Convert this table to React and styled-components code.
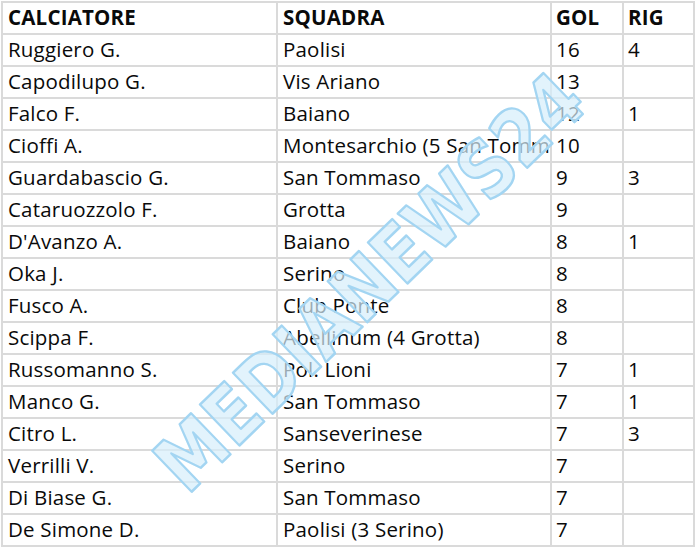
import React from 'react';
import styled, { createGlobalStyle } from 'styled-components';

const GlobalStyle = createGlobalStyle`
  html, body {
    margin: 0;
    padding: 0;
    background: #fff;
  }
  body {
    font-family: "Open Sans", Lato, sans-serif;
    color: #000;
  }
`;

const Page = styled.div`
  position: relative;
  width: 696px;
  height: 547px;
  overflow: hidden;
  padding: 1px 0 0 1px;
  box-sizing: border-box;
`;

const Table = styled.table`
  border-collapse: collapse;
  table-layout: fixed;
  width: 692px;
`;

const Cell = styled.td`
  border: 2px solid #dadada;
  height: 32px;
  padding: 0 0 3px ${(p) => (p.$narrow ? 4 : 5)}px;
  box-sizing: border-box;
  vertical-align: bottom;
  font-size: 20.5px;
  line-height: 25px;
  letter-spacing: 0.2px;
  font-weight: ${(p) => (p.$head ? 700 : 500)};
  color: #0a0a0a;
  white-space: nowrap;
  overflow: hidden;
`;

const Watermark = styled.svg`
  position: absolute;
  left: 0;
  top: 0;
  pointer-events: none;
`;

const rows = [
  ['Ruggiero G.', 'Paolisi', '16', '4'],
  ['Capodilupo G.', 'Vis Ariano', '13', ''],
  ['Falco F.', 'Baiano', '12', '1'],
  ['Cioffi A.', 'Montesarchio (5 San Tommaso)', '10', ''],
  ['Guardabascio G.', 'San Tommaso', '9', '3'],
  ['Cataruozzolo F.', 'Grotta', '9', ''],
  ["D'Avanzo A.", 'Baiano', '8', '1'],
  ['Oka J.', 'Serino', '8', ''],
  ['Fusco A.', 'Club Ponte', '8', ''],
  ['Scippa F.', 'Abellinum (4 Grotta)', '8', ''],
  ['Russomanno S.', 'Pol. Lioni', '7', '1'],
  ['Manco G.', 'San Tommaso', '7', '1'],
  ['Citro L.', 'Sanseverinese', '7', '3'],
  ['Verrilli V.', 'Serino', '7', ''],
  ['Di Biase G.', 'San Tommaso', '7', ''],
  ['De Simone D.', 'Paolisi (3 Serino)', '7', ''],
];

const widths = [275, 274, 72, 71];

export default function App() {
  return (
    <Page>
      <GlobalStyle />
      <Table>
        <colgroup>
          {widths.map((w, i) => (
            <col key={i} style={{ width: w }} />
          ))}
        </colgroup>
        <thead>
          <tr>
            <Cell $head>CALCIATORE</Cell>
            <Cell $head>SQUADRA</Cell>
            <Cell $head $narrow>GOL</Cell>
            <Cell $head $narrow>RIG</Cell>
          </tr>
        </thead>
        <tbody>
          {rows.map((r) => (
            <tr key={r[0]}>
              <Cell>{r[0]}</Cell>
              <Cell>{r[1]}</Cell>
              <Cell $narrow>{r[2]}</Cell>
              <Cell $narrow>{r[3]}</Cell>
            </tr>
          ))}
        </tbody>
      </Table>
      <Watermark width="696" height="547" viewBox="0 0 696 547">
        <text
          x="0"
          y="0"
          transform="translate(370 282) rotate(-44)"
          textAnchor="middle"
          dominantBaseline="central"
          textLength="560"
          lengthAdjust="spacingAndGlyphs"
          fontFamily="'DejaVu Sans', sans-serif"
          fontWeight="700"
          fontSize="78"
          fill="#d6eefb"
          fillOpacity="0.7"
          stroke="#a3d5f2"
          strokeWidth="2.5"
          strokeLinejoin="round"
        >
          MEDIANEWS24
        </text>
      </Watermark>
    </Page>
  );
}
